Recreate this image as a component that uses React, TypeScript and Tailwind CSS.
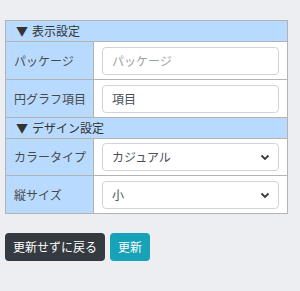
import React from "react";

const font = { fontFamily: '"Noto Sans CJK JP", "Noto Sans", sans-serif' };

function Chevron() {
  return (
    <svg width="10" height="8" viewBox="0 0 10 8" className="absolute right-[8px] top-1/2 -translate-y-1/2">
      <path d="M1.5 2.5 L5 6 L8.5 2.5" stroke="#343a40" strokeWidth="1.8" fill="none" />
    </svg>
  );
}

function Select({ value }: { value: string }) {
  return (
    <div className="relative h-[28px] w-full rounded-[4px] border border-[#ced4da] bg-white flex items-center pl-[9px] text-[12px] text-[#495057]">
      {value}
      <Chevron />
    </div>
  );
}

function Input({ value, placeholder }: { value?: string; placeholder?: string }) {
  return (
    <div className="h-[28px] w-full rounded-[4px] border border-[#ced4da] bg-white flex items-center pl-[9px] text-[12px]">
      {value ? <span className="text-[#495057]">{value}</span> : <span className="text-[#9aa0a6]">{placeholder}</span>}
    </div>
  );
}

export default function App() {
  const headCls = "bg-[#b8daff] border border-[#b3b3b3] h-[21px] pl-[10px] text-left text-[12px] font-normal text-[#333]";
  const labelCls = "bg-[#b8daff] border border-[#b3b3b3] pl-[8px] text-left text-[12px] text-[#4a4a4a] font-normal w-[88px]";
  const cellCls = "bg-white border border-[#b3b3b3] px-[8px]";
  return (
    <div className="w-[300px] h-[291px] bg-[#edeef2] pt-[20px] px-[5px]" style={font}>
      <table className="border-collapse w-[283px]">
        <tbody>
          <tr>
            <th colSpan={2} className={headCls}><span className="mr-[4px]">▼</span>表示設定</th>
          </tr>
          <tr className="h-[38px]">
            <th className={labelCls}>パッケージ</th>
            <td className={cellCls}><Input placeholder="パッケージ" /></td>
          </tr>
          <tr className="h-[38px]">
            <th className={labelCls}>円グラフ項目</th>
            <td className={cellCls}><Input value="項目" /></td>
          </tr>
          <tr>
            <th colSpan={2} className={headCls}><span className="mr-[4px]">▼</span>デザイン設定</th>
          </tr>
          <tr className="h-[37px]">
            <th className={labelCls}>カラータイプ</th>
            <td className={cellCls}><Select value="カジュアル" /></td>
          </tr>
          <tr className="h-[38px]">
            <th className={labelCls}>縦サイズ</th>
            <td className={cellCls}><Select value="小" /></td>
          </tr>
        </tbody>
      </table>
      <div className="mt-[19px] flex gap-[5px]">
        <button className="h-[28px] px-[8px] rounded-[4px] bg-[#343a40] text-white text-[12px]">更新せずに戻る</button>
        <button className="h-[28px] px-[8px] rounded-[4px] bg-[#17a2b8] text-white text-[12px]">更新</button>
      </div>
    </div>
  );
}
